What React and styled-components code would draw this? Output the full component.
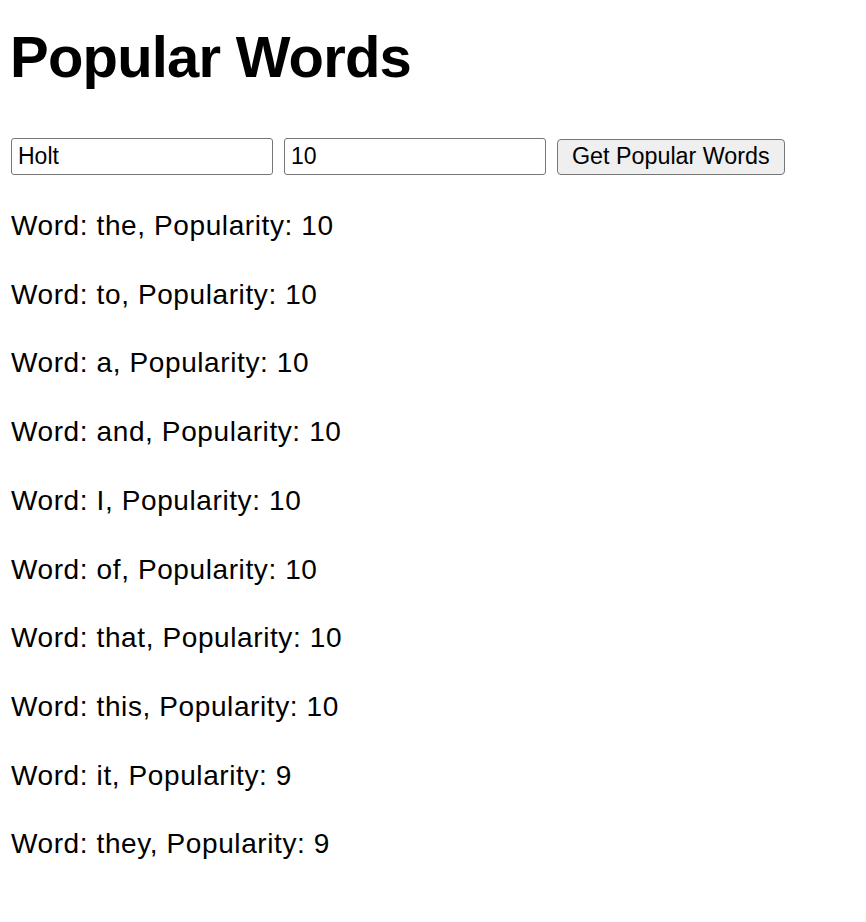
import React, { useState } from 'react'
import styled, { createGlobalStyle } from 'styled-components'

const words = [
	{ word: 'the', popularity: 10 },
	{ word: 'to', popularity: 10 },
	{ word: 'a', popularity: 10 },
	{ word: 'and', popularity: 10 },
	{ word: 'I', popularity: 10 },
	{ word: 'of', popularity: 10 },
	{ word: 'that', popularity: 10 },
	{ word: 'this', popularity: 10 },
	{ word: 'it', popularity: 9 },
	{ word: 'they', popularity: 9 },
]

const App = () => {
	const [name, setName] = useState('Holt')
	const [count, setCount] = useState('10')
	return (
		<>
			<GlobalStyle />
			<StyledPage>
				<StyledTitle>Popular Words</StyledTitle>
				<StyledForm onSubmit={e => e.preventDefault()}>
					<StyledInput value={name} onChange={e => setName(e.target.value)} />
					<StyledInput value={count} onChange={e => setCount(e.target.value)} />
					<StyledButton type='submit'>Get Popular Words</StyledButton>
				</StyledForm>
				<StyledList>
					{words.map(item => (
						<StyledItem key={item.word}>
							Word: {item.word}, Popularity: {item.popularity}
						</StyledItem>
					))}
				</StyledList>
			</StyledPage>
		</>
	)
}

const GlobalStyle = createGlobalStyle`
	body {
		margin: 0;
		background: #fff;
		color: #000;
		font-family: 'Liberation Sans', Arial, sans-serif;
	}
`

const StyledPage = styled.div`
	padding: 0 11px;
`

const StyledTitle = styled.h1`
	margin: 24px 0 48px -1px;
	font-size: 58px;
	line-height: 66px;
	font-weight: bold;
	letter-spacing: -0.8px;
`

const StyledForm = styled.form`
	display: flex;
	align-items: center;
	gap: 11px;
	height: 37px;
`

const StyledInput = styled.input`
	box-sizing: border-box;
	width: 262px;
	height: 37px;
	padding: 0 6px;
	border: 1px solid #767676;
	border-radius: 3px;
	font-family: 'Liberation Sans', Arial, sans-serif;
	font-size: 23px;
	color: #000;
	outline: none;
`

const StyledButton = styled.button`
	box-sizing: border-box;
	height: 36px;
	padding: 0 14px;
	background: #efefef;
	border: 1px solid #767676;
	border-radius: 4px;
	font-family: 'Liberation Sans', Arial, sans-serif;
	font-size: 23.3px;
	color: #000;
	cursor: pointer;
`

const StyledList = styled.div`
	display: flex;
	flex-direction: column;
	gap: 28px;
	padding-top: 31px;
`

const StyledItem = styled.p`
	margin: 0;
	font-size: 28px;
	line-height: 40.7px;
	letter-spacing: 0.6px;
`

export default App
